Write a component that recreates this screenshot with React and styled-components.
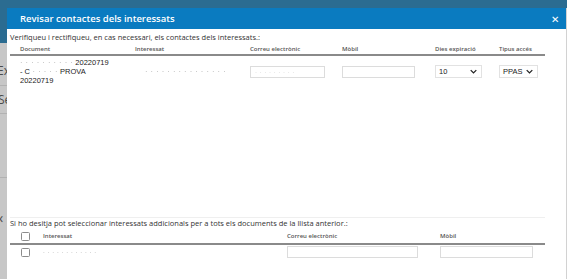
import styled, { createGlobalStyle } from "styled-components";

const GlobalStyle = createGlobalStyle`
  html, body {
    margin: 0;
    padding: 0;
    overflow: hidden;
  }
  body {
    font-family: "Open Sans", "Liberation Sans", sans-serif;
  }
`;

/////////////////////////////page behind/////////////////////////////
const Page = styled.div`
  position: relative;
  width: 567px;
  height: 279px;
  background-color: #c7c7c7;
  overflow: hidden;
`;

const TopBar = styled.div`
  height: 43px;
  background-color: #2b6c91;
`;

const SideItem = styled.div`
  height: ${(p) => p.h}px;
  box-sizing: border-box;
  border-bottom: ${(p) => (p.line ? "1px solid #b2b2b2" : "none")};
  display: flex;
  align-items: center;
  padding-top: ${(p) => p.top || 0}px;
  margin-left: ${(p) => p.shift || 0}px;
  font-size: ${(p) => p.size || 12}px;
  color: #4a4a4a;
`;

/////////////////////////////modal/////////////////////////////
const Modal = styled.div`
  position: absolute;
  left: 7px;
  top: 8px;
  width: 559px;
  height: 300px;
  background-color: #ffffff;
  border-right: 1px solid #d2d2d2;
  display: flex;
  flex-direction: column;
`;

const Header = styled.div`
  height: 21px;
  background-color: #0a7bc0;
  display: flex;
  align-items: center;
  justify-content: space-between;
  padding: 0 7px 0 13px;
  color: white;

  p {
    margin: 0;
    font-size: 9.5px;
    font-weight: 600;
  }
`;

const Close = styled.span`
  font-size: 10px;
  line-height: 1;
`;

const Body = styled.div`
  padding: 2px 0 0 3px;
  display: flex;
  flex-direction: column;
`;

const Intro = styled.div`
  font-size: 7.5px;
  color: #333;
  height: 12px;
  line-height: 12px;
`;

const TopArea = styled.div`
  width: 535px;
  height: 174px;
  border-bottom: 1px solid #efefef;
`;

const Grid = styled.div`
  display: grid;
  grid-template-columns: ${(p) => p.cols};
  align-items: center;
  padding-left: 10px;
`;

const HeadRow = styled(Grid)`
  height: 11px;
  border-bottom: 2px solid #8a8a8a;
  font-size: 6px;
  font-weight: 600;
  color: #555;
`;

const Row = styled(Grid)`
  padding-top: 2px;
  padding-bottom: 4px;
  font-family: "Liberation Sans", Arial, sans-serif;
  font-size: 7.5px;
  color: #222;
`;

const Lines = styled.div`
  line-height: 9px;
`;

const Redacted = styled.span`
  color: #b9b9b9;
  filter: blur(0.6px);
  letter-spacing: 0.5px;
  padding-left: ${(p) => p.indent || 0}px;
`;

const Field = styled.div`
  width: ${(p) => p.w}px;
  height: 12px;
  box-sizing: border-box;
  border: 1px solid #dcdcdc;
  display: flex;
  align-items: center;
  padding-left: 4px;
  font-size: 6px;
`;

const Select = styled.div`
  width: ${(p) => p.w}px;
  height: 13px;
  box-sizing: border-box;
  border: 1px solid #e2e2e2;
  display: flex;
  align-items: center;
  justify-content: space-between;
  padding: 0 4px 0 3px;
  font-size: 7.5px;
  color: #222;

  svg {
    width: 7px;
    height: 5px;
  }
`;

const Note = styled.div`
  font-size: 7.5px;
  color: #333;
  height: 11px;
  line-height: 11px;
`;

const Check = styled.span`
  display: inline-block;
  width: 7px;
  height: 7px;
  border: 1px solid #8c8c8c;
  border-radius: 1.5px;
  margin-left: 1px;
`;

const BottomHead = styled(HeadRow)`
  width: 525px;
  height: 14px;
`;

const BottomRow = styled(Grid)`
  width: 525px;
  height: 14px;
  font-size: 7px;
`;

const Chevron = () => (
  <svg viewBox="0 0 10 6">
    <path d="M1 1l4 4 4-4" fill="none" stroke="#222" strokeWidth="1.8" />
  </svg>
);

const topCols = "115px 115px 92px 93px 64px 1fr";
const bottomCols = "23px 244px 153px 1fr";

function App() {
  return (
    <>
      <GlobalStyle />
      <Page>
        <TopBar />
        <SideItem h={43} top={12} line shift={-3}>
          Exp
        </SideItem>
        <SideItem h={28} line shift={-2}>
          Se
        </SideItem>
        <SideItem h={64} line />
        <SideItem h={78} size={14} shift={-1}>
          ‹
        </SideItem>

        <Modal>
          <Header>
            <p>Revisar contactes dels interessats</p>
            <Close>✕</Close>
          </Header>
          <Body>
            <Intro>
              Verifiqueu i rectifiqueu, en cas necessari, els contactes dels
              interessats.:
            </Intro>
            <TopArea>
              <HeadRow cols={topCols}>
                <span>Document</span>
                <span>Interessat</span>
                <span>Correu electrònic</span>
                <span>Mòbil</span>
                <span>Dies expiració</span>
                <span>Tipus accés</span>
              </HeadRow>
              <Row cols={topCols}>
                <Lines>
                  <div>
                    <Redacted>· · · · · · · · · ·</Redacted> 20220719
                  </div>
                  <div>
                    - C<Redacted> · · · · ·</Redacted> PROVA
                  </div>
                  <div>20220719</div>
                </Lines>
                <Redacted indent={10}>· · · · · · · · · · · · · · ·</Redacted>
                <Field w={75}>
                  <Redacted>· · · · · · · · ·</Redacted>
                </Field>
                <Field w={73} />
                <Select w={47}>
                  <span>10</span>
                  <Chevron />
                </Select>
                <Select w={39}>
                  <span>PPAS</span>
                  <Chevron />
                </Select>
              </Row>
            </TopArea>
            <Note>
              Si ho desitja pot seleccionar interessats addicionals per a tots
              els documents de la llista anterior.:
            </Note>
            <BottomHead cols={bottomCols}>
              <Check />
              <span>Interessat</span>
              <span>Correu electrònic</span>
              <span>Mòbil</span>
            </BottomHead>
            <BottomRow cols={bottomCols}>
              <Check />
              <Redacted>· · · · · · · · · · · ·</Redacted>
              <Field w={131} />
              <Field w={93} />
            </BottomRow>
          </Body>
        </Modal>
      </Page>
    </>
  );
}

export default App;
